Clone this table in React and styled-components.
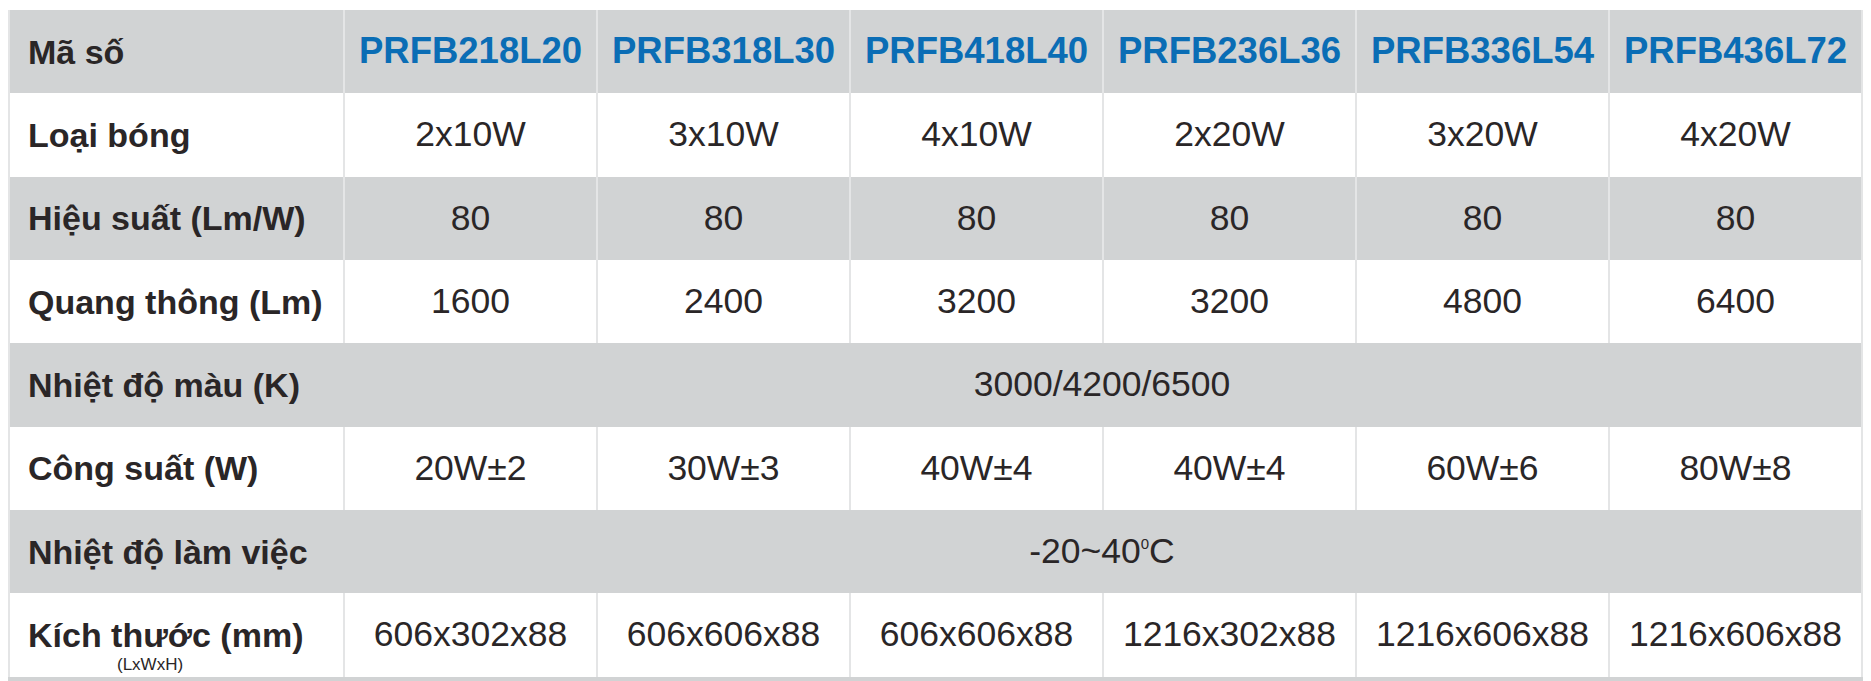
import React from "react";
import styled, { createGlobalStyle } from "styled-components";

const GlobalStyle = createGlobalStyle`
    html, body {
        margin: 0;
        padding: 0;
        background: #ffffff;
        font-family: "Liberation Sans", Arial, sans-serif;
    }
`;

const Page = styled.div`
    padding: 10px 0 0 8px;
`;

const Table = styled.div`
    display: grid;
    grid-template-columns: 333px repeat(6, 251px);
    grid-auto-rows: 83.33px;
    column-gap: 2px;
    width: max-content;
    padding: 0 2px;
    background-color: #e4e5e6;
    border-bottom: 4px solid #d1d3d4;
    color: #2a2627;
`;

const Cell = styled.div`
    display: flex;
    align-items: center;
    justify-content: center;
    background-color: ${(props) => (props.shaded ? "#d1d3d4" : "#ffffff")};
    font-size: 35.5px;
    line-height: 1;
    white-space: nowrap;
    grid-column: ${(props) => (props.span ? `span ${props.span}` : "auto")};
    ${(props) => props.span && "margin-left: -2px;"}
`;

const Label = styled(Cell)`
    position: relative;
    justify-content: flex-start;
    padding-left: 18px;
    font-size: 34px;
    font-weight: 700;
    margin-left: 0;
`;

const Model = styled(Cell)`
    color: #0a6db5;
    font-size: 36.5px;
    font-weight: 700;
`;

const Note = styled.span`
    position: absolute;
    left: 107px;
    top: 62.5px;
    font-size: 17px;
    font-weight: 400;
    line-height: 1;
`;

const Deg = styled.sup`
    font-size: 15px;
    line-height: 0;
    vertical-align: 14.5px;
`;

const models = [
    "PRFB218L20",
    "PRFB318L30",
    "PRFB418L40",
    "PRFB236L36",
    "PRFB336L54",
    "PRFB436L72",
];

const rows = [
    { label: "Loại bóng", values: ["2x10W", "3x10W", "4x10W", "2x20W", "3x20W", "4x20W"] },
    { label: "Hiệu suất (Lm/W)", values: ["80", "80", "80", "80", "80", "80"] },
    { label: "Quang thông (Lm)", values: ["1600", "2400", "3200", "3200", "4800", "6400"] },
    { label: "Nhiệt độ màu (K)", merged: "3000/4200/6500" },
    { label: "Công suất (W)", values: ["20W±2", "30W±3", "40W±4", "40W±4", "60W±6", "80W±8"] },
    {
        label: "Nhiệt độ làm việc",
        merged: (
            <span>
                -20~40<Deg>0</Deg>C
            </span>
        ),
    },
    {
        label: "Kích thước (mm)",
        note: "(LxWxH)",
        values: [
            "606x302x88",
            "606x606x88",
            "606x606x88",
            "1216x302x88",
            "1216x606x88",
            "1216x606x88",
        ],
    },
];

export default function App() {
    return (
        <>
            <GlobalStyle />
            <Page>
                <Table>
                    <Label shaded>Mã số</Label>
                    {models.map((m) => (
                        <Model key={m} shaded>
                            {m}
                        </Model>
                    ))}
                    {rows.map((row, i) => {
                        const shaded = i % 2 === 1;
                        return (
                            <React.Fragment key={row.label}>
                                <Label shaded={shaded}>
                                    {row.label}
                                    {row.note && <Note>{row.note}</Note>}
                                </Label>
                                {row.merged ? (
                                    <Cell shaded={shaded} span={6}>
                                        {row.merged}
                                    </Cell>
                                ) : (
                                    row.values.map((v, j) => (
                                        <Cell key={j} shaded={shaded}>
                                            {v}
                                        </Cell>
                                    ))
                                )}
                            </React.Fragment>
                        );
                    })}
                </Table>
            </Page>
        </>
    );
}
